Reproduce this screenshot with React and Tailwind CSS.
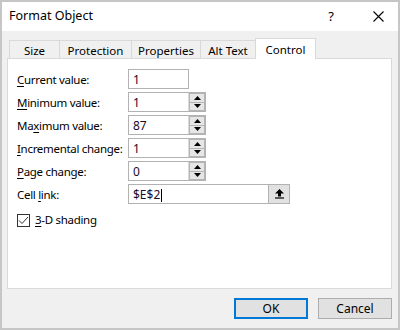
import React from 'react';

const font = { fontFamily: '"Noto Sans", "Open Sans", sans-serif' };

function Label({ before, u, after }) {
  return (
    <span className="text-[11.5px] tracking-[-0.3px] text-[#000] whitespace-nowrap">
      {before}<span className="underline underline-offset-2">{u}</span>{after}
    </span>
  );
}

function Spinner() {
  return (
    <div className="flex flex-col w-[17px] h-full border-l border-[#dadada] bg-[#f0f0f0]">
      <div className="flex-1 flex items-center justify-center border border-[#b5b5b5] bg-[#e6e6e6]">
        <svg width="7" height="4" viewBox="0 0 7 4"><path d="M3.5 0L7 4H0z" fill="#000" /></svg>
      </div>
      <div className="flex-1 flex items-center justify-center border border-t-0 border-[#b5b5b5] bg-[#e6e6e6]">
        <svg width="7" height="4" viewBox="0 0 7 4"><path d="M0 0h7L3.5 4z" fill="#000" /></svg>
      </div>
    </div>
  );
}

function Field({ label, value, spin, width = 'w-[78px]' }) {
  return (
    <div className="flex items-center h-[20px]">
      <div className="w-[111px] -mt-[3px]">{label}</div>
      <div className={`flex ${width} h-[20px] border border-[#b2b2b2] bg-white`}>
        <div className="flex-1 flex items-center pl-[4px] pt-[2px] text-[12px] text-[#1b0a2a]">{value}</div>
        {spin && <Spinner />}
      </div>
    </div>
  );
}

export default function App() {
  const tabs = [
    { name: 'Size', w: 'w-[51px]' },
    { name: 'Protection', w: 'w-[72px]' },
    { name: 'Properties', w: 'w-[69px]' },
    { name: 'Alt Text', w: 'w-[55px]' },
  ];

  return (
    <div style={font} className="w-[400px] h-[330px] border-2 border-[#c6c6c6] bg-[#f0f0f0] flex flex-col overflow-hidden">
      {/* Title bar */}
      <div className="h-[29px] shrink-0 bg-white flex items-center pl-[7px]">
        <span className="text-[12.5px] text-[#000] -mt-[1px]">Format Object</span>
        <span className="ml-auto mr-[39px] text-[13px] text-[#000]">?</span>
        <svg className="mr-[14px]" width="11" height="11" viewBox="0 0 11 11">
          <path d="M0.5 0.5L10.5 10.5M10.5 0.5L0.5 10.5" stroke="#000" strokeWidth="1.1" />
        </svg>
      </div>

      {/* Tabs */}
      <div className="flex items-end h-[27px] shrink-0 pl-[7px]">
        {tabs.map((t, i) => (
          <div
            key={t.name}
            className={`${t.w} h-[18px] flex items-center justify-center border-t border-r border-[#d9d9d9] ${i === 0 ? 'border-l' : ''} text-[11.5px] text-[#000] pt-[3px]`}
          >
            {t.name}
          </div>
        ))}
        <div className="w-[61px] h-[21px] -ml-[1px] flex items-center justify-center border border-b-0 border-[#d9d9d9] bg-white text-[11.5px] text-[#000] relative top-[1px] z-10 pt-[2px]">
          Control
        </div>
      </div>

      {/* Panel */}
      <div className="mx-[5px] w-[385px] h-[231px] shrink-0 border border-[#d9d9d9] bg-white pl-[9px] pt-[10px] flex flex-col gap-[3px]">
        <Field label={<Label u="C" after="urrent value:" />} value="1" width="w-[61px]" />
        <Field label={<Label u="M" after="inimum value:" />} value="1" spin />
        <Field label={<Label before="Ma" u="x" after="imum value:" />} value="87" spin />
        <Field label={<Label u="I" after="ncremental change:" />} value="1" spin />
        <Field label={<Label u="P" after="age change:" />} value="0" spin />
        <div className="flex items-center h-[20px]">
          <div className="w-[111px] -mt-[3px]"><Label before="Cell " u="l" after="ink:" /></div>
          <div className="flex w-[162px] h-[20px] border border-[#b2b2b2] bg-white">
            <div className="flex-1 flex items-center pl-[4px] pt-[2px] text-[12px] text-[#1b0a2a]">
              $E$2<span className="inline-block w-[1px] h-[13px] bg-black ml-[1px]" />
            </div>
            <div className="w-[21px] h-full flex items-center justify-center bg-[#e1e1e1] border-l border-[#b2b2b2]">
              <svg width="9" height="10" viewBox="0 0 9 10">
                <path d="M4.5 0L9 4.5H6V7.5H3V4.5H0z" fill="#000" />
                <path d="M0 9h9" stroke="#000" strokeWidth="1.2" />
              </svg>
            </div>
          </div>
        </div>
        <div className="flex items-center mt-[6px] h-[14px]">
          <div className="w-[13px] h-[13px] border border-[#333] bg-white flex items-center justify-center">
            <svg width="11" height="9" viewBox="0 0 11 9">
              <path d="M1 4.5L4 7.5L10 1" stroke="#333" strokeWidth="1" fill="none" />
            </svg>
          </div>
          <span className="ml-[5px] text-[11.5px] tracking-[-0.3px] text-[#000]"><span className="underline underline-offset-2">3</span>-D shading</span>
        </div>
      </div>

      {/* Buttons */}
      <div className="flex justify-end gap-[10px] pr-[6px] pt-[9px]">
        <button className="w-[74px] h-[21px] border-2 border-[#0078d7] bg-[#e1e1e1] text-[12px] text-[#000] flex items-center justify-center">OK</button>
        <button className="w-[74px] h-[21px] border border-[#adadad] bg-[#e1e1e1] text-[12px] text-[#000] flex items-center justify-center">Cancel</button>
      </div>
    </div>
  );
}
